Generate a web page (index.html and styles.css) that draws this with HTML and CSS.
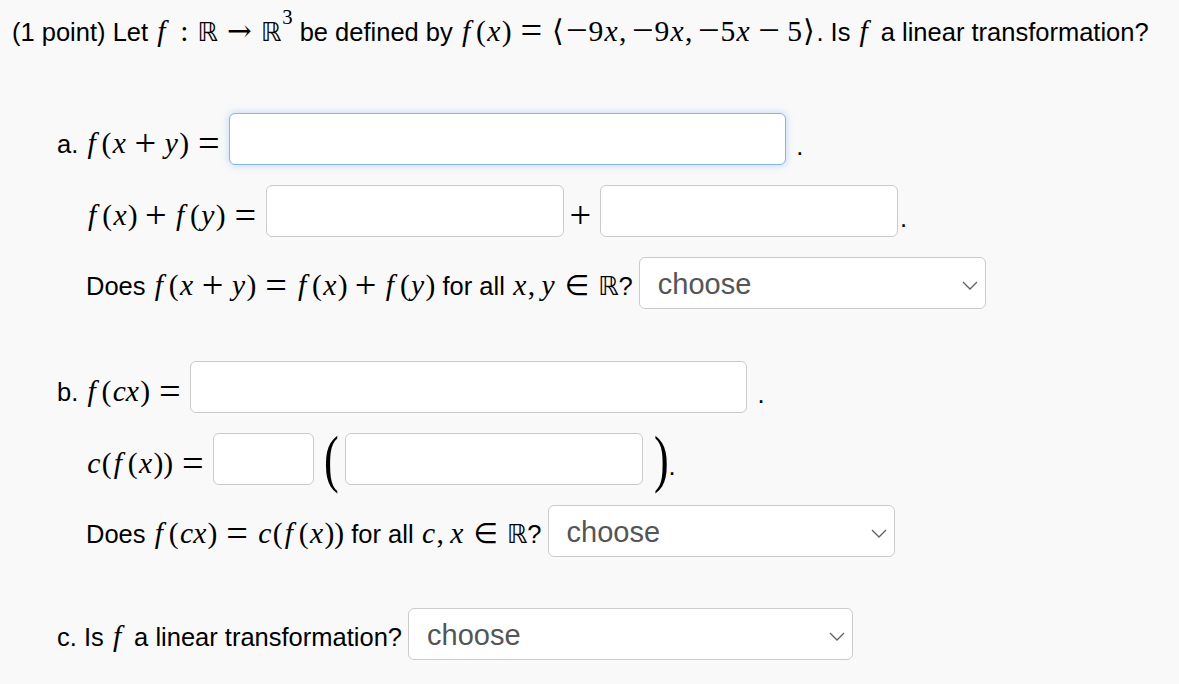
FILE: index.html
```html
<!DOCTYPE html>
<html>
<head>
<meta charset="utf-8">
<link rel="stylesheet" href="styles.css">
</head>
<body>
<div class="problem">
  <p class="intro">(1 point) Let <span class="m"><i class="f">f</i><span class="op rel colon">:</span><span class="bb">ℝ</span><span class="op rel arrow">→</span><span class="bb">ℝ</span><sup>3</sup></span> be defined by <span class="m"><i class="f">f</i>(<i>x</i>)<span class="op rel">=</span><span class="ang">⟨</span><span class="op neg">−</span>9<i>x</i><span class="comma">,</span><span class="op neg">−</span>9<i>x</i><span class="comma">,</span><span class="op neg">−</span>5<i>x</i><span class="op bin">−</span>5<span class="ang">⟩</span></span>. Is <span class="m"><i class="f">f</i></span> a linear transformation?</p>

  <div class="part part-a">
    <div class="row">
      <span class="txt">a. <span class="m"><i class="f">f</i>(<i>x</i><span class="op bin">+</span><i>y</i>)<span class="op rel end">=</span></span></span>
      <input class="ans focused w-long" type="text">
      <span class="txt dot">.</span>
    </div>
    <div class="row sub">
      <span class="txt"><span class="m"><i class="f">f</i>(<i>x</i>)<span class="op bin">+</span><i class="f">f</i>(<i>y</i>)<span class="op rel end">=</span></span></span>
      <input class="ans w-mid" type="text">
      <span class="txt plus"><span class="m"><span class="op">+</span></span></span>
      <input class="ans w-mid" type="text">
      <span class="txt dot tight">.</span>
    </div>
    <div class="row sub sel-row">
      <span class="txt">Does <span class="m"><i class="f">f</i>(<i>x</i><span class="op bin">+</span><i>y</i>)<span class="op rel">=</span><i class="f">f</i>(<i>x</i>)<span class="op bin">+</span><i class="f">f</i>(<i>y</i>)</span> for all <span class="m"><i>x</i><span class="comma">,</span><i>y</i><span class="op rel in">∈</span><span class="bb">ℝ</span></span>?</span>
      <div class="select w-sel1"><span class="choose">choose</span><svg class="chev" viewBox="0 0 16 9"><path d="M1 1 L8 8 L15 1" fill="none" stroke="#606060" stroke-width="1.3"/></svg></div>
    </div>
  </div>

  <div class="part part-b">
    <div class="row">
      <span class="txt">b. <span class="m"><i class="f">f</i>(<i>cx</i>)<span class="op rel end">=</span></span></span>
      <input class="ans w-long" type="text">
      <span class="txt dot">.</span>
    </div>
    <div class="row sub">
      <span class="txt"><span class="m"><i>c</i>(<i class="f">f</i>(<i>x</i>))<span class="op rel end">=</span></span></span>
      <input class="ans w-short" type="text">
      <span class="paren">(</span>
      <input class="ans w-mid pin" type="text">
      <span class="paren close">)</span>
      <span class="txt dot tight">.</span>
    </div>
    <div class="row sub sel-row">
      <span class="txt">Does <span class="m"><i class="f">f</i>(<i>cx</i>)<span class="op rel">=</span><i>c</i>(<i class="f">f</i>(<i>x</i>))</span> for all <span class="m"><i>c</i><span class="comma">,</span><i>x</i><span class="op rel in">∈</span><span class="bb">ℝ</span></span>?</span>
      <div class="select w-sel1"><span class="choose">choose</span><svg class="chev" viewBox="0 0 16 9"><path d="M1 1 L8 8 L15 1" fill="none" stroke="#606060" stroke-width="1.3"/></svg></div>
    </div>
  </div>

  <div class="part part-c">
    <div class="row sel-row">
      <span class="txt">c. Is <span class="m"><i class="f">f</i></span> a linear transformation?</span>
      <div class="select w-sel2"><span class="choose">choose</span><svg class="chev" viewBox="0 0 16 9"><path d="M1 1 L8 8 L15 1" fill="none" stroke="#606060" stroke-width="1.3"/></svg></div>
    </div>
  </div>
</div>
</body>
</html>
```

FILE: styles.css
```css
html, body {
  margin: 0;
  padding: 0;
  background: #f9f9f9;
}

body {
  font-family: "Liberation Sans", Arial, Helvetica, sans-serif;
  font-size: 25.5px;
  color: #000;
}

.problem {
  padding: 12px 12px 0 12px;
}

.intro {
  margin: 0;
  line-height: 38px;
  white-space: nowrap;
}

/* math */
.m {
  font-family: "Liberation Serif", "Times New Roman", serif;
  font-size: 1.16em;
  white-space: nowrap;
}

.m i {
  font-style: italic;
  padding: 0 0.045em;
}

.m i.f {
  padding: 0 0.2em 0 0.07em;
}

.op {
  display: inline-block;
  text-align: center;
  font-size: 1.3em;
  line-height: 0;
  width: 0.6em;
  vertical-align: -0.06em;
}

.rel {
  margin: 0 0.214em;
}

.rel.end {
  margin-right: 0;
}

.bin {
  margin: 0 0.171em;
}

.neg {
  width: 0.6em;
}

.colon {
  font-size: 1em;
  width: 0.278em;
  vertical-align: 0;
  margin: 0 0.3em;
}

.arrow {
  width: 0.85em;
  font-family: "DejaVu Serif", serif;
  font-size: 1em;
  vertical-align: 0;
  margin: 0 0.3em;
}

.in {
  font-family: "DejaVu Sans", sans-serif;
  font-size: 0.95em;
  width: 0.9em;
  vertical-align: 0;
  margin: 0 0.3em;
}

.comma {
  margin-right: 0.167em;
}

.ang {
  padding: 0 0.04em;
}

.bb {
  font-family: "DejaVu Sans", sans-serif;
  font-size: 0.88em;
}

.m sup {
  font-size: 0.7em;
  line-height: 0;
  vertical-align: 0.8em;
  margin-left: 0.04em;
}

/* layout */
.part {
  padding-left: 45px;
}

.part-a {
  margin-top: 62px;
}

.part-b {
  margin-top: 52px;
}

.part-c {
  margin-top: 51px;
}

.row {
  display: flex;
  align-items: flex-end;
  margin-top: 20px;
}

.part .row:first-child {
  margin-top: 0;
}

.row.sub {
  padding-left: 29px;
}

.txt {
  line-height: 1;
  margin-bottom: 6px;
  white-space: nowrap;
}

.sel-row {
  align-items: center;
}

.sel-row .txt {
  margin-bottom: 0;
  margin-top: 6px;
}

.dot {
  font-family: "Liberation Sans", Arial, sans-serif;
  margin-left: 10px;
}

.dot.tight {
  margin-left: 2px;
}

.plus {
  margin: 0 8px 6px 5px;
}

.ans {
  box-sizing: border-box;
  height: 52px;
  margin: 0 0 0 9px;
  padding: 0 10px;
  border: 1px solid #cacaca;
  border-radius: 6px;
  background: #fff;
  font: inherit;
  outline: none;
}

.plus + .ans,
.ans.pin {
  margin-left: 0;
}

.ans.focused {
  border-color: #86b4ec;
  box-shadow: 0 0 7px 1px rgba(110, 165, 235, 0.35);
}

.w-long { width: 557px; }
.w-mid { width: 298px; }
.w-short { width: 101px; }

.paren {
  font-family: "Liberation Serif", "Times New Roman", serif;
  font-size: 63px;
  line-height: 40px;
  height: 40px;
  margin-bottom: 6px;
  transform: scaleX(0.7);
  width: 14px;
  margin-left: 8px;
  margin-right: 9px;
}

.paren.close {
  margin-left: 9px;
  margin-right: 0;
}

.select {
  box-sizing: border-box;
  height: 52px;
  margin-left: 6px;
  padding: 0 7px 0 18px;
  border: 1px solid #cbcbcb;
  border-radius: 6px;
  background: #fff;
  display: flex;
  align-items: center;
  justify-content: space-between;
}

.w-sel1 { width: 347px; }
.w-sel2 { width: 445px; }

.choose {
  color: #555;
  font-size: 29px;
  line-height: 1;
  margin-top: 2px;
}

.chev {
  width: 16px;
  height: 9px;
  margin-top: 4px;
}
```
